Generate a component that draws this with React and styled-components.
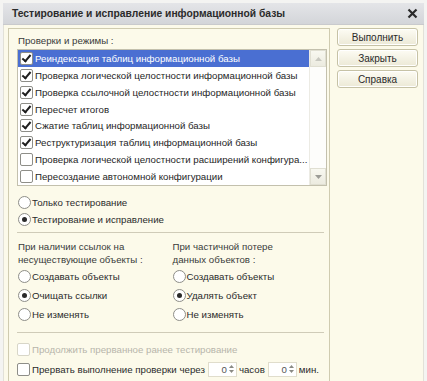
import React, { useState } from 'react';
import styled, { createGlobalStyle } from 'styled-components';

const GlobalStyle = createGlobalStyle`
  html, body {
    margin: 0;
    padding: 0;
    background: #ffffff;
  }
  body {
    font-family: "Liberation Sans", Arial, sans-serif;
    font-size: 9.7px;
    color: #1e1e1e;
  }
`;

const checks = [
  { label: 'Реиндексация таблиц информационной базы', on: true },
  { label: 'Проверка логической целостности информационной базы', on: true },
  { label: 'Проверка ссылочной целостности информационной базы', on: true },
  { label: 'Пересчет итогов', on: true },
  { label: 'Сжатие таблиц информационной базы', on: true },
  { label: 'Реструктуризация таблиц информационной базы', on: true },
  { label: 'Проверка логической целостности расширений конфигура...', on: false },
  { label: 'Пересоздание автономной конфигурации', on: false },
];

const SpinBox = () => (
  <Spin>
    <SpinValue>0</SpinValue>
    <SpinArrows>
      <svg width="5" height="3" viewBox="0 0 5 3"><path d="M0 3 L2.5 0 L5 3 Z" fill="#8a8a84" /></svg>
      <svg width="5" height="3" viewBox="0 0 5 3"><path d="M0 0 L2.5 3 L5 0 Z" fill="#8a8a84" /></svg>
    </SpinArrows>
  </Spin>
);

export default function App() {
  const [mode, setMode] = useState(1);
  const [refs, setRefs] = useState(1);
  const [loss, setLoss] = useState(1);

  return (
    <>
      <GlobalStyle />
      <Window>
        <TitleBar>
          <Title>Тестирование и исправление информационной базы</Title>
          <Close>
            <svg width="11" height="11" viewBox="0 0 11 11">
              <path d="M1.5 1.5 L9.5 9.5 M9.5 1.5 L1.5 9.5" stroke="#2a2a2a" strokeWidth="2.2" />
            </svg>
          </Close>
        </TitleBar>
        <Body>
          <Group>
            <Caption>Проверки и режимы :</Caption>
            <ListBox>
              <Rows>
                {checks.map((c, i) => (
                  <Row key={i} $selected={i === 0}>
                    <CheckBox $on={c.on} />
                    <RowText>{c.label}</RowText>
                  </Row>
                ))}
              </Rows>
              <ScrollBar>
                <ScrollBtn>
                  <svg width="7" height="4" viewBox="0 0 7 4"><path d="M0 4 L3.5 0 L7 4 Z" fill="#c8c8c0" /></svg>
                </ScrollBtn>
                <ScrollBtn>
                  <svg width="7" height="4" viewBox="0 0 7 4"><path d="M0 0 L3.5 4 L7 0 Z" fill="#9c9c96" /></svg>
                </ScrollBtn>
              </ScrollBar>
            </ListBox>

            <RadioGroup>
              <RadioRow onClick={() => setMode(0)}>
                <Radio $on={mode === 0} />
                Только тестирование
              </RadioRow>
              <RadioRow onClick={() => setMode(1)}>
                <Radio $on={mode === 1} />
                Тестирование и исправление
              </RadioRow>
            </RadioGroup>

            <Separator />

            <Columns>
              <Column>
                <ColCaption>При наличии ссылок на<br />несуществующие объекты :</ColCaption>
                {['Создавать объекты', 'Очищать ссылки', 'Не изменять'].map((t, i) => (
                  <OptRow key={t} onClick={() => setRefs(i)}>
                    <Radio $on={refs === i} />
                    {t}
                  </OptRow>
                ))}
              </Column>
              <Column>
                <ColCaption>При частичной потере<br />данных объектов :</ColCaption>
                {['Создавать объекты', 'Удалять объект', 'Не изменять'].map((t, i) => (
                  <OptRow key={t} onClick={() => setLoss(i)}>
                    <Radio $on={loss === i} />
                    {t}
                  </OptRow>
                ))}
              </Column>
            </Columns>

            <Separator $top={8} />

            <BottomRow $disabled $first>
              <CheckBox $disabled />
              Продолжить прерванное ранее тестирование
            </BottomRow>
            <BottomRow>
              <CheckBox />
              Прервать выполнение проверки через
              <SpinBox />
              часов
              <SpinBox />
              мин.
            </BottomRow>
          </Group>

          <Buttons>
            <Button>Выполнить</Button>
            <Button>Закрыть</Button>
            <Button>Справка</Button>
          </Buttons>
        </Body>
      </Window>
    </>
  );
}

const Window = styled.div`
  width: 427px;
  height: 381px;
  box-sizing: border-box;
  padding: 3px 3px 0 3px;
  background: #f4f4f2;
  display: flex;
  flex-direction: column;
  overflow: hidden;
`;

const TitleBar = styled.div`
  height: 21px;
  flex: none;
  display: flex;
  align-items: center;
  justify-content: space-between;
  padding: 0 4px 0 9px;
  background: linear-gradient(#e4e5e8, #d3d5d9);
  border-bottom: 1px solid #c9cacd;
`;

const Title = styled.span`
  font-weight: bold;
  font-size: 10.3px;
  color: #2b2b2b;
`;

const Close = styled.span`
  display: flex;
  align-items: center;
  padding-right: 2px;
`;

const Body = styled.div`
  flex: 1;
  display: flex;
  align-items: flex-start;
  gap: 7px;
  padding: 3px 6px 0 4px;
  background: #fcfaea;
  border-left: 1px solid #e2e1d8;
  border-right: 1px solid #e2e1d8;
`;

const Group = styled.div`
  width: 322px;
  flex: none;
  height: 360px;
  box-sizing: border-box;
  border: 1px solid #cfcbb0;
  border-bottom: none;
  padding: 5px 3px 0 8px;
  display: flex;
  flex-direction: column;
  overflow: hidden;
`;

const Caption = styled.div`
  color: #3a3a3a;
  height: 14px;
  line-height: 14px;
  margin-bottom: 1px;
  margin-left: 1px;
`;

const ListBox = styled.div`
  width: 310px;
  height: 137px;
  flex: none;
  box-sizing: border-box;
  border: 1px solid #c3c0ad;
  background: #ffffff;
  display: flex;
  overflow: hidden;
`;

const Rows = styled.div`
  flex: 1;
  min-width: 0;
  display: flex;
  flex-direction: column;
`;

const Row = styled.div`
  height: 17px;
  display: flex;
  align-items: center;
  padding-left: 2px;
  gap: 1px;
  background: ${p => (p.$selected ? '#4a6fd2' : 'transparent')};
  color: ${p => (p.$selected ? '#ffffff' : '#1e1e1e')};
  white-space: nowrap;
  overflow: hidden;
`;

const RowText = styled.span`
  line-height: 17px;
`;

const CheckBox = styled.span`
  width: 11px;
  height: 11px;
  flex: none;
  border: 1px solid ${p => (p.$disabled ? '#d8d6c8' : '#8e8e88')};
  border-radius: 2px;
  background: #ffffff;
  position: relative;
  margin-right: 1px;
  &::after {
    content: '';
    display: ${p => (p.$on ? 'block' : 'none')};
    position: absolute;
    left: 3px;
    top: 0px;
    width: 3px;
    height: 7px;
    border: solid #1e1e1e;
    border-width: 0 2px 2px 0;
    transform: rotate(40deg);
  }
`;

const ScrollBar = styled.div`
  width: 16px;
  flex: none;
  background: #fdfdfb;
  border-left: 1px solid #ecebe4;
  display: flex;
  flex-direction: column;
  justify-content: space-between;
`;

const ScrollBtn = styled.div`
  height: 15px;
  display: flex;
  align-items: center;
  justify-content: center;
  background: linear-gradient(#f8f8f0, #ecebe0);
  border: 1px solid #e0dfd2;
`;

const RadioGroup = styled.div`
  display: flex;
  flex-direction: column;
  gap: 5px;
  margin-top: 10px;
`;

const RadioRow = styled.label`
  display: flex;
  align-items: center;
  gap: 1px;
  height: 12px;
  color: #2a2a2a;
  cursor: default;
`;

const Radio = styled.span`
  width: 11px;
  height: 11px;
  flex: none;
  border: 1px solid #8e8e88;
  border-radius: 50%;
  background: #ffffff;
  display: flex;
  align-items: center;
  justify-content: center;
  margin-left: 1px;
  &::after {
    content: '';
    display: ${p => (p.$on ? 'block' : 'none')};
    width: 5px;
    height: 5px;
    border-radius: 50%;
    background: #2a2a2a;
  }
`;

const Separator = styled.div`
  height: 1px;
  width: 307px;
  flex: none;
  background: #cfcbb8;
  margin-top: ${p => p.$top ?? 7}px;
`;

const Columns = styled.div`
  display: flex;
  margin-top: 7px;
`;

const Column = styled.div`
  width: 156px;
  display: flex;
  flex-direction: column;
`;

const ColCaption = styled.div`
  line-height: 13px;
  color: #3a3a3a;
  margin-left: 1px;
  margin-bottom: 1px;
`;

const OptRow = styled.label`
  display: flex;
  align-items: center;
  gap: 1px;
  height: 19px;
  color: #2a2a2a;
`;

const BottomRow = styled.div`
  display: flex;
  align-items: center;
  gap: 1px;
  height: 20px;
  flex: none;
  white-space: nowrap;
  color: ${p => (p.$disabled ? '#b7b5aa' : '#2a2a2a')};
  margin-top: ${p => (p.$first ? '6px' : '0')};
`;

const Spin = styled.span`
  display: inline-flex;
  align-items: center;
  width: 29px;
  height: 15px;
  flex: none;
  box-sizing: border-box;
  border: 1px solid #e0ddcc;
  background: #ffffff;
  margin: 0 1px 0 2px;
`;

const SpinValue = styled.span`
  flex: 1;
  text-align: right;
  padding-right: 2px;
  color: #555;
`;

const SpinArrows = styled.span`
  display: flex;
  flex-direction: column;
  gap: 2px;
  padding-right: 2px;
`;

const Buttons = styled.div`
  display: flex;
  flex-direction: column;
  gap: 3px;
`;

const Button = styled.button`
  width: 81px;
  height: 18px;
  padding: 0;
  font-family: "Liberation Sans", Arial, sans-serif;
  font-size: 10px;
  color: #2a2a2a;
  border: 1px solid #c6c2a6;
  border-radius: 3px;
  background: linear-gradient(#fdfcf4, #ece9d6);
  box-shadow: inset 0 0 0 1px #ffffff;
`;
